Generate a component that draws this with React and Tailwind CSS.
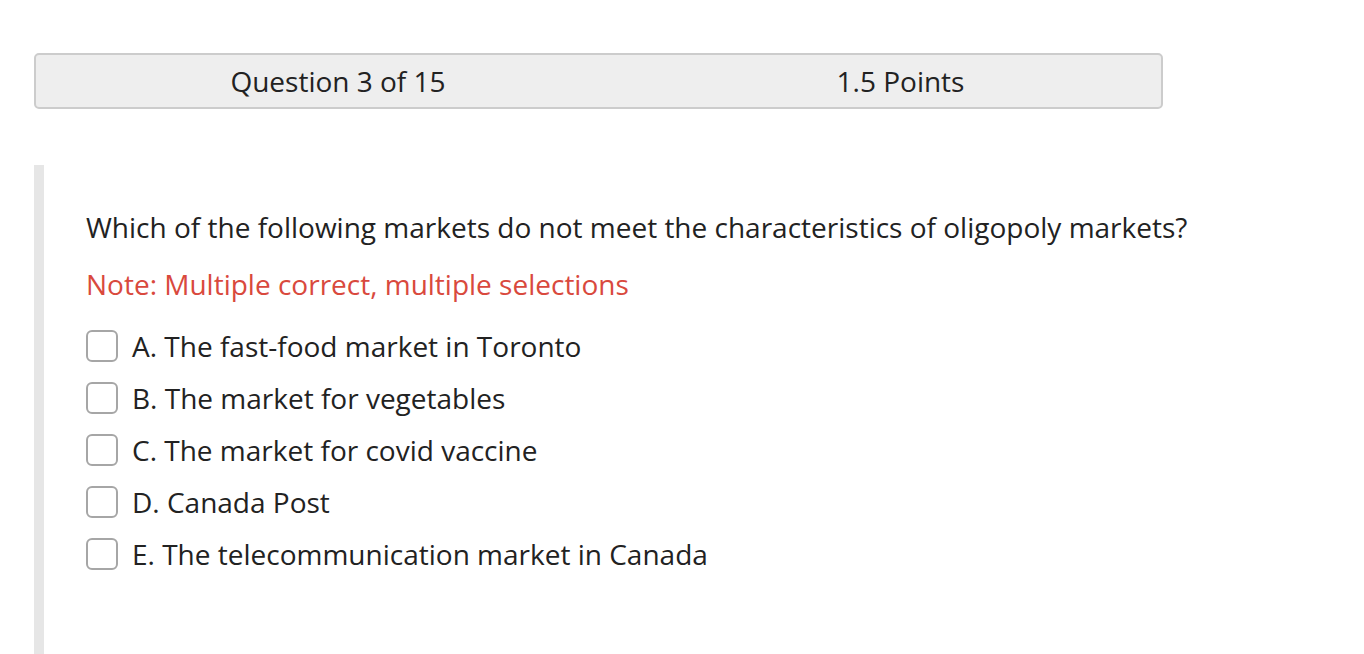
export default function App() {
  const options = [
    "A. The fast-food market in Toronto",
    "B. The market for vegetables",
    "C. The market for covid vaccine",
    "D. Canada Post",
    "E. The telecommunication market in Canada",
  ];
  return (
    <div
      className="w-[1364px] h-[654px] bg-white overflow-hidden text-[#222]"
      style={{ fontFamily: '"Open Sans", sans-serif' }}
    >
      <div className="pt-[53px] pl-[34px]">
        <div className="w-[1129px] h-[56px] bg-[#eeeeee] border-2 border-[#cccccc] rounded-[5px] grid grid-cols-[604px_1fr] items-center text-[28px]">
          <div className="text-center">Question 3 of 15</div>
          <div className="text-center">1.5 Points</div>
        </div>
      </div>
      <div className="mt-[56px] ml-[34px] border-l-[10px] border-[#e6e6e6] h-[500px] pl-[42px] pt-[42px]">
        <div className="text-[28px] leading-[40px]">
          Which of the following markets do not meet the characteristics of oligopoly markets?
        </div>
        <div className="text-[28px] leading-[40px] mt-[17px] text-[#d9493d]">
          Note: Multiple correct, multiple selections
        </div>
        <div className="mt-[16px] flex flex-col">
          {options.map((o) => (
            <div key={o} className="flex items-center h-[52px]">
              <div className="w-[32px] h-[32px] border-2 border-[#a6a6a6] rounded-[6px] bg-white shrink-0" />
              <div className="ml-[14px] text-[28px] leading-[40px]">{o}</div>
            </div>
          ))}
        </div>
      </div>
    </div>
  );
}
